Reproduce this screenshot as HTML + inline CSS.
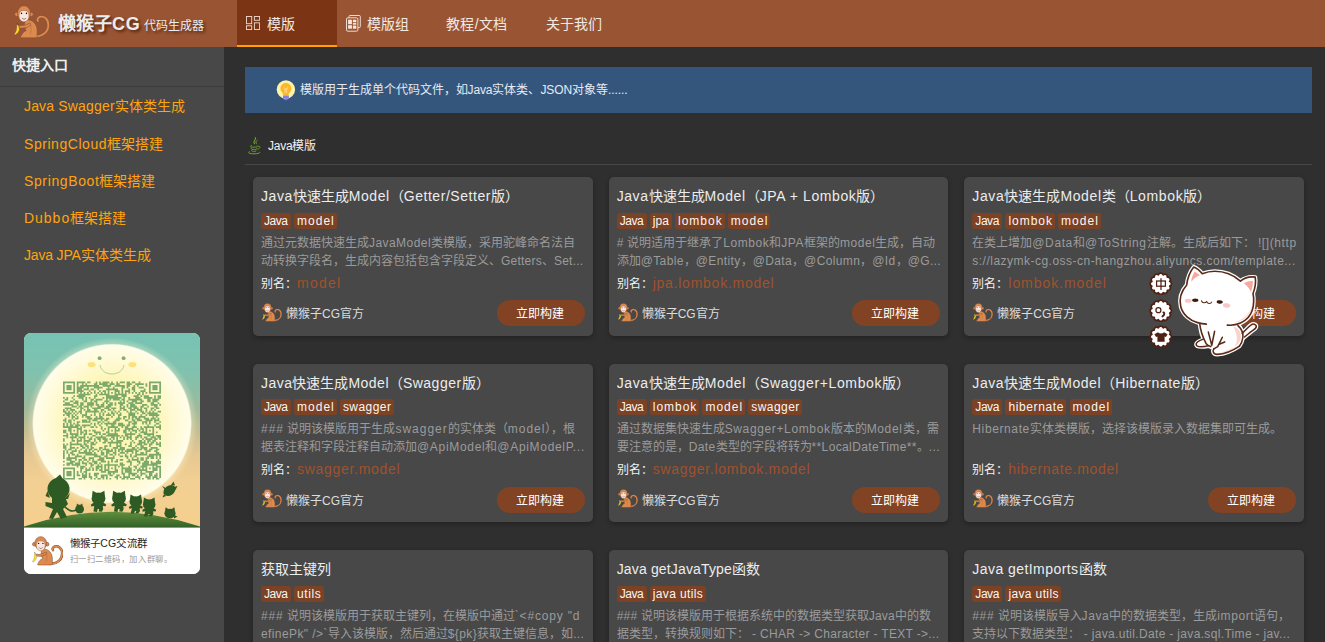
<!DOCTYPE html>
<html lang="zh-CN">
<head>
<meta charset="utf-8">
<title>懒猴子CG 代码生成器</title>
<style>
*{box-sizing:border-box;margin:0;padding:0}
html,body{width:1325px;height:642px;overflow:hidden;background:#2f2f2f;font-family:"Liberation Sans",sans-serif;color:#fff}
body{position:relative}
a{text-decoration:none;color:inherit}
#hdr{position:absolute;left:0;top:0;width:1325px;height:47px;background:#995533}
#logo{position:absolute;left:14px;top:5px;width:36px;height:34px}
#brand{position:absolute;left:58px;top:10px;height:28px;line-height:28px;font-size:18px;font-weight:bold;color:#ececec;text-shadow:2px 2px 3px rgba(60,20,0,.75);white-space:nowrap}
#brand small{font-size:12px;font-weight:normal;margin-left:3px;position:relative;top:0px}
.tab{position:absolute;top:0;height:47px;width:100px;padding-left:9px;font-size:14px;line-height:49px;color:#f3e9e3;white-space:nowrap;overflow:hidden}
.tab.on{background:#7b3514;border-bottom:2px solid #ffa200}
.tab svg{position:absolute;left:9px;top:16px;width:14px;height:14px}
.tab.ic span{position:absolute;left:29.5px;top:0}
#side{position:absolute;left:0;top:47px;width:224px;height:595px;background:#484848}
#side h3{position:absolute;left:12px;top:7px;font-size:14px;line-height:22px;font-weight:bold;color:#f0f0f0}
#side hr{position:absolute;left:0;top:39px;width:224px;height:1px;border:0;background:#3a3a3a}
.ql{position:absolute;left:24px;font-size:14px;line-height:20px;height:20px;color:#ffa40c;white-space:nowrap}
#main{position:absolute;left:224px;top:47px;width:1101px;height:595px;background:#2f2f2f}
#tip{position:absolute;left:245px;top:67px;width:1067px;height:46px;background:#34567d;font-size:12px;line-height:46px;color:#e6ebf2;padding-left:54.5px;white-space:nowrap}
#tip svg{position:absolute;left:31px;top:13px;width:20px;height:22px}
#sec{position:absolute;left:268px;top:135px;font-size:12px;line-height:22px;color:#f2f2f2;white-space:nowrap}
#secic{position:absolute;left:247px;top:137px;width:15px;height:18px}
#sechr{position:absolute;left:245px;top:164px;width:1067px;height:1px;background:#474747}
.card{position:absolute;width:339.67px;height:158.5px;background:#484848;border-radius:5px;box-shadow:0 2px 5px rgba(0,0,0,.28);padding:8px;overflow:hidden}
.card h4{font-size:14px;font-weight:normal;line-height:22px;height:22px;color:#ededed;white-space:nowrap;overflow:hidden}
.tags{height:16px;margin-top:6px;white-space:nowrap;font-size:0}
.tags i{display:inline-block;font-style:normal;font-size:12px;line-height:17.6px;height:16px;padding:0 0 0 3px;text-align:left;overflow:hidden;white-space:nowrap;margin-right:3.1px;vertical-align:top;background:#7b4226;border-radius:2.5px;color:#fbf6f2}
.desc{margin-top:4.5px;height:36px;line-height:18px;font-size:12px;color:#9b9b9b}
.desc>span{display:block;height:18px;white-space:nowrap}
.alias{margin-top:2.5px;height:22px;line-height:22px;font-size:12px;color:#f2f2f2;white-space:nowrap}
.alias b{font-weight:normal;font-size:14px;color:#a0522d}
.by{position:absolute;left:9px;bottom:12.3px;height:20px;line-height:22.4px;font-size:12px;color:#ddd;padding-left:24px;white-space:nowrap}
.by svg{position:absolute;left:0;top:-0.7px;width:20px;height:19px}
.btn{position:absolute;right:8px;bottom:9.5px;width:88px;height:26px;border-radius:13px;background:#824324;font-size:12px;line-height:28.4px;text-align:center;color:#fff;padding-right:2px;overflow:hidden}
.r1 .tags{margin-top:5.6px}.r1 .desc{margin-top:4.9px}
#qr{position:absolute;left:24px;top:333px;width:176px;height:241px;border-radius:7px;overflow:hidden;background:#fff}
</style>
</head>
<body>
<svg style="position:absolute;width:0;height:0;overflow:hidden">
<defs>
<symbol id="mk" viewBox="120 65 500 475">
  <path d="M425 505 C520 500 600 440 598 340 C596 250 530 215 480 232 C450 243 440 270 452 288" fill="none" stroke="#8a5231" stroke-width="40" stroke-linecap="round"/>
  <path d="M425 505 C520 500 600 440 598 340 C596 250 530 215 480 232 C450 243 440 270 452 288" fill="none" stroke="#dd8a4f" stroke-width="26" stroke-linecap="round"/>
  <path d="M300 270 C380 270 440 330 442 420 L442 500 C442 518 430 524 415 524 L225 524 C205 524 203 505 220 495 C230 470 245 440 290 420 C270 400 262 350 270 300 Z" fill="#dd8a4f" stroke="#8a5231" stroke-width="9" stroke-linejoin="round"/>
  <path d="M345 330 C365 380 360 440 345 470" fill="none" stroke="#b06a3b" stroke-width="8" stroke-linecap="round"/>
  <path d="M335 335 C300 372 250 372 205 368" fill="none" stroke="#8a5231" stroke-width="40" stroke-linecap="round"/>
  <path d="M335 335 C300 372 250 372 205 368" fill="none" stroke="#dd8a4f" stroke-width="27" stroke-linecap="round"/>
  <path d="M170 340 C200 380 205 440 135 480 C125 470 128 462 140 450 C160 420 160 380 160 345 Z" fill="#ffe01e" stroke="#a8862a" stroke-width="6" stroke-linejoin="round"/>
  <path d="M158 322 L178 342" stroke="#5a3a1a" stroke-width="9" stroke-linecap="round"/>
  <circle cx="158" cy="195" r="30" fill="#dd8a4f" stroke="#8a5231" stroke-width="9"/>
  <circle cx="358" cy="195" r="30" fill="#dd8a4f" stroke="#8a5231" stroke-width="9"/>
  <ellipse cx="258" cy="180" rx="92" ry="105" fill="#dd8a4f" stroke="#8a5231" stroke-width="9"/>
  <path d="M258 145 C235 135 192 150 190 195 C180 260 215 300 258 300 C301 300 336 260 326 195 C324 150 281 135 258 145 Z" fill="#fbe5df" stroke="#8a5231" stroke-width="7"/>
  <circle cx="224" cy="182" r="11" fill="#1d1008"/>
  <circle cx="293" cy="182" r="11" fill="#1d1008"/>
  <path d="M232 250 C245 270 272 270 285 250" fill="none" stroke="#5a2d1a" stroke-width="8" stroke-linecap="round"/>
</symbol>
<symbol id="badge" viewBox="-11 -11 22 22">
  <path d="M8.40 -2.25A2.4 2.4 0 0 1 8.40 2.25A2.4 2.4 0 0 1 6.15 6.15A2.4 2.4 0 0 1 2.25 8.40A2.4 2.4 0 0 1 -2.25 8.40A2.4 2.4 0 0 1 -6.15 6.15A2.4 2.4 0 0 1 -8.40 2.25A2.4 2.4 0 0 1 -8.40 -2.25A2.4 2.4 0 0 1 -6.15 -6.15A2.4 2.4 0 0 1 -2.25 -8.40A2.4 2.4 0 0 1 2.25 -8.40A2.4 2.4 0 0 1 6.15 -6.15A2.4 2.4 0 0 1 8.40 -2.25Z" fill="#fff" stroke="#4f2114" stroke-width="1.7" stroke-linejoin="round"/>
</symbol>
</defs>
</svg>
<div id="hdr">
  <svg id="logo"><use href="#mk"/></svg>
  <div id="brand">懒猴子<span style="letter-spacing:.8px">CG</span><small>代码生成器</small></div>
  <a class="tab on ic" style="left:237px"><svg viewBox="0 0 14 14" fill="none" stroke="#ecd3c6" stroke-width=".95"><rect x=".5" y=".5" width="5.2" height="7.2"/><rect x="8.4" y=".5" width="5.2" height="3.8"/><rect x=".5" y="9.8" width="5.2" height="3.7"/><rect x="8.4" y="6.8" width="5.2" height="6.7"/></svg><span>模版</span></a>
  <a class="tab ic" style="left:337px"><svg viewBox="0 0 15 17" style="top:15px;width:15px;height:17px" fill="none" stroke="#f3e2d8" stroke-width=".95"><path d="M3 2.6 V1.5 Q3 .5 4 .5 H13.3 Q14.3 .5 14.3 1.5 V11.6 Q14.3 12.6 13.3 12.6 H12"/><rect x=".5" y="2.8" width="11.4" height="13.4" rx="1.3"/><g fill="#f6e8e0" stroke="none"><rect x="2.1" y="4.7" width="3.8" height="4.5"/><rect x="6.9" y="4.7" width="3.4" height="2.6"/><rect x="6.9" y="8.1" width="3.4" height="1.6"/><rect x="2.1" y="10.2" width="3.8" height="3.5"/><rect x="6.9" y="10.6" width="3.4" height="3.1"/></g></svg><span>模版组</span></a>
  <a class="tab" style="left:437px">教程<span style="margin:0 .8px">/</span>文档</a>
  <a class="tab" style="left:537px">关于我们</a>
</div>
<div id="side">
  <h3>快捷入口</h3><hr>
  <a class="ql" style="top:49px" id="q0"><span class="l" style="letter-spacing:0.167px">Java Swagger</span>实体类生成</a>
  <a class="ql" style="top:87px" id="q1"><span class="l" style="letter-spacing:0.554px">SpringCloud</span>框架搭建</a>
  <a class="ql" style="top:124px" id="q2"><span class="l" style="letter-spacing:0.620px">SpringBoot</span>框架搭建</a>
  <a class="ql" style="top:161px" id="q3"><span class="l" style="letter-spacing:0.980px">Dubbo</span>框架搭建</a>
  <a class="ql" style="top:198px" id="q4"><span class="l" style="letter-spacing:-0.175px">Java JPA</span>实体类生成</a>
</div>
<div id="tip"><svg viewBox="0 0 20 22"><circle cx="9.9" cy="9.5" r="9.2" fill="#fdf3a8"/><path d="M9.9 3.1 C6.7 3.1 4.4 5.6 4.4 8.6 C4.4 10.6 5.5 11.9 6.5 12.9 C7.1 13.5 7.3 14.2 7.3 15.2 H12.5 C12.5 14.2 12.7 13.5 13.3 12.9 C14.3 11.9 15.4 10.6 15.4 8.6 C15.4 5.6 13.1 3.1 9.9 3.1Z" fill="#fbb82d"/><path d="M8.2 7.6 L9.1 9.6 L9.9 8.2 L10.7 9.6 L11.6 7.6 M9.1 9.6 V12.6 M10.7 9.6 V12.6" fill="none" stroke="#fde7a0" stroke-width=".7" stroke-linejoin="round" stroke-linecap="round"/><path d="M7 15.6 H12.8 V18 Q12.8 19.6 11.2 19.8 L9.9 20.6 L8.6 19.8 Q7 19.6 7 18Z" fill="#7b72d6"/><path d="M7 17 H12.8 M7.2 18.5 H12.6" stroke="#aaa2f2" stroke-width=".6"/></svg>模版用于生成单个代码文件，如<span class="l" style="letter-spacing:-0.103px">Java</span>实体类、<span class="l" style="letter-spacing:-0.103px">JSON</span>对象等<span class="l" style="letter-spacing:-0.103px">......</span></div>
<svg id="secic" viewBox="0 0 15 18" fill="none" stroke="#6aa51f" stroke-linecap="round"><path d="M8.2 .6 C9.8 2.6 5.4 4 7.4 6.6" stroke-width="1.1"/><path d="M10.2 3.2 C8.6 4.4 8.4 5.4 9.4 6.8" stroke-width=".9"/><path d="M4.2 8.6 C2 9.4 4 10.2 7 10.2 C10 10.2 11.4 9.6 10.4 8.8" stroke-width="1"/><path d="M11.6 9.2 C13.6 8.8 13.8 11.4 10.8 12.2" stroke-width=".9"/><path d="M4.4 11 C3.2 11.8 5 12.6 7.2 12.6 C9 12.6 10.2 12.2 9.8 11.6" stroke-width="1"/><path d="M4.8 13.2 C4 14 5.4 14.6 7.2 14.6 C8.6 14.6 9.6 14.2 9.2 13.8" stroke-width=".9"/><path d="M2.4 14.6 C-.4 15.6 2.4 16.8 7 16.8 C11 16.8 14 16 12.4 15" stroke-width="1"/></svg>
<div id="sec"><span class="l" style="letter-spacing:-0.250px">Java</span>模版</div>
<div id="sechr"></div>

<div class="card r0" style="left:253px;top:177px">
  <h4 id="t0"><span class="l" style="letter-spacing:0.554px">Java</span>快速生成<span class="l" style="letter-spacing:0.554px">Model</span>（<span class="l" style="letter-spacing:0.554px">Getter/Setter</span>版）</h4>
  <div class="tags"><i style="width:30px;letter-spacing:-0.453px">Java</i><i style="width:42.7px;letter-spacing:1.003px">model</i></div>
  <div class="desc"><span id="d0_0">通过元数据快速生成<span class="l" style="letter-spacing:0.441px">JavaModel</span>类模版，采用驼峰命名法自</span><span id="d0_1">动转换字段名，生成内容包括包含字段定义、<span class="l" style="letter-spacing:0.229px">Getters</span>、<span class="l" style="letter-spacing:0.229px">Set...</span></span></div>
  <div class="alias">别名：<b id="a0" style="letter-spacing:1.240px">model</b></div>
  <div class="by"><svg><use href="#mk"/></svg>懒猴子<span class="l">CG</span>官方</div><a class="btn">立即构建</a>
</div>
<div class="card r0" style="left:608.67px;top:177px">
  <h4 id="t1"><span class="l" style="letter-spacing:0.590px">Java</span>快速生成<span class="l" style="letter-spacing:0.590px">Model</span>（<span class="l" style="letter-spacing:0.590px">JPA + Lombok</span>版）</h4>
  <div class="tags"><i style="width:30px;letter-spacing:-0.453px">Java</i><i style="width:22.2px;letter-spacing:0.092px">jpa</i><i style="width:49.6px;letter-spacing:0.983px">lombok</i><i style="width:42.7px;letter-spacing:1.003px">model</i></div>
  <div class="desc"><span id="d1_0"><span class="l" style="letter-spacing:0.544px">#</span> 说明适用于继承了<span class="l" style="letter-spacing:0.544px">Lombok</span>和<span class="l" style="letter-spacing:0.544px">JPA</span>框架的<span class="l" style="letter-spacing:0.544px">model</span>生成，自动</span><span id="d1_1">添加<span class="l" style="letter-spacing:0.379px">@Table</span>，<span class="l" style="letter-spacing:0.379px">@Entity</span>，<span class="l" style="letter-spacing:0.379px">@Data</span>，<span class="l" style="letter-spacing:0.379px">@Column</span>，<span class="l" style="letter-spacing:0.379px">@Id</span>，<span class="l" style="letter-spacing:0.379px">@G...</span></span></div>
  <div class="alias">别名：<b id="a1" style="letter-spacing:0.756px">jpa.lombok.model</b></div>
  <div class="by"><svg><use href="#mk"/></svg>懒猴子<span class="l">CG</span>官方</div><a class="btn">立即构建</a>
</div>
<div class="card r0" style="left:964.33px;top:177px">
  <h4 id="t2"><span class="l" style="letter-spacing:0.627px">Java</span>快速生成<span class="l" style="letter-spacing:0.627px">Model</span>类（<span class="l" style="letter-spacing:0.627px">Lombok</span>版）</h4>
  <div class="tags"><i style="width:30px;letter-spacing:-0.453px">Java</i><i style="width:49.6px;letter-spacing:0.983px">lombok</i><i style="width:42.7px;letter-spacing:1.003px">model</i></div>
  <div class="desc"><span id="d2_0">在类上增加<span class="l" style="letter-spacing:0.605px">@Data</span>和<span class="l" style="letter-spacing:0.605px">@ToString</span>注解。生成后如下： <span class="l" style="letter-spacing:0.605px">![](http</span></span><span id="d2_1"><span class="l" style="letter-spacing:0.481px">s://lazymk-cg.oss-cn-hangzhou.aliyuncs.com/template...</span></span></div>
  <div class="alias">别名：<b id="a2" style="letter-spacing:0.944px">lombok.model</b></div>
  <div class="by"><svg><use href="#mk"/></svg>懒猴子<span class="l">CG</span>官方</div><a class="btn">立即构建</a>
</div>
<div class="card r1" style="left:253px;top:363.5px">
  <h4 id="t3"><span class="l" style="letter-spacing:0.472px">Java</span>快速生成<span class="l" style="letter-spacing:0.472px">Model</span>（<span class="l" style="letter-spacing:0.472px">Swagger</span>版）</h4>
  <div class="tags"><i style="width:30px;letter-spacing:-0.453px">Java</i><i style="width:42.7px;letter-spacing:1.003px">model</i><i style="width:54.1px;letter-spacing:0.457px">swagger</i></div>
  <div class="desc"><span id="d3_0"><span class="l" style="letter-spacing:1.001px">###</span> 说明该模版用于生成<span class="l" style="letter-spacing:1.001px">swagger</span>的实体类（<span class="l" style="letter-spacing:1.001px">model</span>），根</span><span id="d3_1">据表注释和字段注释自动添加<span class="l" style="letter-spacing:0.683px">@ApiModel</span>和<span class="l" style="letter-spacing:0.683px">@ApiModelP...</span></span></div>
  <div class="alias">别名：<b id="a3" style="letter-spacing:0.711px">swagger.model</b></div>
  <div class="by"><svg><use href="#mk"/></svg>懒猴子<span class="l">CG</span>官方</div><a class="btn">立即构建</a>
</div>
<div class="card r1" style="left:608.67px;top:363.5px">
  <h4 id="t4"><span class="l" style="letter-spacing:0.630px">Java</span>快速生成<span class="l" style="letter-spacing:0.630px">Model</span>（<span class="l" style="letter-spacing:0.630px">Swagger+Lombok</span>版）</h4>
  <div class="tags"><i style="width:30px;letter-spacing:-0.453px">Java</i><i style="width:49.6px;letter-spacing:0.983px">lombok</i><i style="width:42.7px;letter-spacing:1.003px">model</i><i style="width:54.1px;letter-spacing:0.457px">swagger</i></div>
  <div class="desc"><span id="d4_0">通过数据集快速生成<span class="l" style="letter-spacing:0.636px">Swagger+Lombok</span>版本的<span class="l" style="letter-spacing:0.636px">Model</span>类，需</span><span id="d4_1">要注意的是，<span class="l" style="letter-spacing:0.374px">Date</span>类型的字段将转为<span class="l" style="letter-spacing:0.374px">**LocalDateTime**</span>。<span class="l" style="letter-spacing:0.374px">...</span></span></div>
  <div class="alias">别名：<b id="a4" style="letter-spacing:0.720px">swagger.lombok.model</b></div>
  <div class="by"><svg><use href="#mk"/></svg>懒猴子<span class="l">CG</span>官方</div><a class="btn">立即构建</a>
</div>
<div class="card r1" style="left:964.33px;top:363.5px">
  <h4 id="t5"><span class="l" style="letter-spacing:0.566px">Java</span>快速生成<span class="l" style="letter-spacing:0.566px">Model</span>（<span class="l" style="letter-spacing:0.566px">Hibernate</span>版）</h4>
  <div class="tags"><i style="width:30px;letter-spacing:-0.453px">Java</i><i style="width:61px;letter-spacing:0.619px">hibernate</i><i style="width:42.7px;letter-spacing:1.003px">model</i></div>
  <div class="desc"><span id="d5_0"><span class="l" style="letter-spacing:0.612px">Hibernate</span>实体类模版，选择该模版录入数据集即可生成。</span><span id="d5_1"></span></div>
  <div class="alias">别名：<b id="a5" style="letter-spacing:0.667px">hibernate.model</b></div>
  <div class="by"><svg><use href="#mk"/></svg>懒猴子<span class="l">CG</span>官方</div><a class="btn">立即构建</a>
</div>
<div class="card r2" style="left:253px;top:550px">
  <h4 id="t6">获取主键列</h4>
  <div class="tags"><i style="width:30px;letter-spacing:-0.453px">Java</i><i style="width:29.7px;letter-spacing:0.589px">utils</i></div>
  <div class="desc"><span id="d6_0"><span class="l" style="letter-spacing:0.812px">###</span> 说明该模版用于获取主键列，在模版中通过<span class="l" style="letter-spacing:0.812px">`&lt;#copy &quot;d</span></span><span id="d6_1"><span class="l" style="letter-spacing:0.400px">efinePk&quot; /&gt;`</span>导入该模版，然后通过<span class="l" style="letter-spacing:0.400px">${pk}</span>获取主键信息，如<span class="l" style="letter-spacing:0.400px">...</span></span></div>
  <div class="alias">别名：<b id="a6" style="letter-spacing:0.400px">definePk</b></div>
  <div class="by"><svg><use href="#mk"/></svg>懒猴子<span class="l">CG</span>官方</div><a class="btn">立即构建</a>
</div>
<div class="card r2" style="left:608.67px;top:550px">
  <h4 id="t7"><span class="l" style="letter-spacing:0.153px">Java getJavaType</span>函数</h4>
  <div class="tags"><i style="width:30px;letter-spacing:-0.453px">Java</i><i style="width:56px;letter-spacing:0.368px">java utils</i></div>
  <div class="desc"><span id="d7_0"><span class="l" style="letter-spacing:0.214px">###</span> 说明该模版用于根据系统中的数据类型获取<span class="l" style="letter-spacing:0.214px">Java</span>中的数</span><span id="d7_1">据类型，转换规则如下： <span class="l" style="letter-spacing:0.324px">- CHAR -&gt; Character - TEXT -&gt;...</span></span></div>
  <div class="alias">别名：<b id="a7" style="letter-spacing:0.400px">getJavaType</b></div>
  <div class="by"><svg><use href="#mk"/></svg>懒猴子<span class="l">CG</span>官方</div><a class="btn">立即构建</a>
</div>
<div class="card r2" style="left:964.33px;top:550px">
  <h4 id="t8"><span class="l" style="letter-spacing:0.439px">Java getImports</span>函数</h4>
  <div class="tags"><i style="width:30px;letter-spacing:-0.453px">Java</i><i style="width:56px;letter-spacing:0.368px">java utils</i></div>
  <div class="desc"><span id="d8_0"><span class="l" style="letter-spacing:0.608px">###</span> 说明该模版导入<span class="l" style="letter-spacing:0.608px">Java</span>中的数据类型，生成<span class="l" style="letter-spacing:0.608px">import</span>语句，</span><span id="d8_1">支持以下数据类型： <span class="l" style="letter-spacing:0.333px">- java.util.Date - java.sql.Time - jav...</span></span></div>
  <div class="alias">别名：<b id="a8" style="letter-spacing:0.400px">getImports</b></div>
  <div class="by"><svg><use href="#mk"/></svg>懒猴子<span class="l">CG</span>官方</div><a class="btn">立即构建</a>
</div>
<svg id="cat" viewBox="0 0 835 642" style="position:absolute;left:1140px;top:260px;width:130px;height:100px">
<g fill="#fff" stroke="#fff" stroke-width="26" stroke-linejoin="round"><path d="M650 476 C680 450 700 425 714 416 C725 408 745 410 747 425 C748 440 735 445 720 455 C700 470 690 480 668 498 Z"/><path d="M384 408 C388 450 396 481 410 510 C385 515 358 530 361 545 C365 562 410 558 440 552 C450 556 462 562 474 571 C462 590 475 606 495 606 C540 604 600 580 639 553 C662 520 664 480 655 455 C648 440 640 428 629 415 Z"/><path d="M561 418 C590 421 620 416 645 405 C700 380 728 330 730 270 C732 250 730 235 726 215 C740 180 745 140 740 110 C705 105 670 115 645 135 C600 95 540 72 480 72 C450 72 425 78 400 88 C385 70 365 52 345 45 C325 70 305 115 300 160 C265 200 250 250 262 300 C275 350 320 388 370 402 C390 408 408 411 426 412Z"/></g>
<path d="M656 471 C680 450 700 425 714 416 C725 408 745 410 747 425 C748 440 735 445 720 455 C700 470 690 480 672 494" fill="none" stroke="#5b2a17" stroke-width="10" stroke-linecap="round" stroke-linejoin="round"/>
<path d="M599 426 C640 440 655 480 645 510 C640 530 625 545 609 556 C625 530 632 490 599 426Z" fill="#f9d3ca"/>
<path d="M620 560 C580 585 540 598 500 602 C560 580 600 560 620 560Z" fill="#f9d3ca" opacity=".7"/>
<g fill="none" stroke="#5b2a17" stroke-width="10" stroke-linecap="round" stroke-linejoin="round">
<path d="M384 412 C388 450 396 481 424 536 C432 546 444 553 454 556"/>
<path d="M406 508 C385 515 358 530 361 545 C365 562 410 558 439 551"/>
<path d="M439 463 L461 548 M479 458 L461 548"/>
<path d="M529 496 L499 556 L474 571 M544 526 L509 541"/>
<path d="M474 571 C462 590 475 606 495 606 C540 604 600 580 639 553"/>
<path d="M629 421 C650 440 664 470 661 496 C658 520 650 540 639 553"/>
</g>
<path d="M640 395 C700 370 728 320 726 260 C715 330 680 375 600 402Z" fill="#f9d9d2" opacity=".8"/>
<path d="M561 418 C590 421 620 416 645 405 C700 380 728 330 730 270 C732 250 730 235 726 215 C740 180 745 140 740 110 C705 105 670 115 645 135 C600 95 540 72 480 72 C450 72 425 78 400 88 C385 70 365 52 345 45 C325 70 305 115 300 160 C265 200 250 250 262 300 C275 350 320 388 370 402 C390 408 408 411 426 412" fill="none" stroke="#5b2a17" stroke-width="10.5" stroke-linecap="round" stroke-linejoin="round"/>
<path d="M350 75 C335 100 328 125 330 140 C345 118 365 105 385 98 C375 88 362 78 350 75Z" fill="#f7a9a0"/>
<path d="M725 135 C700 132 680 140 668 150 C690 165 705 185 712 205 C722 180 726 158 725 135Z" fill="#f7a9a0"/>
<ellipse cx="310" cy="262" rx="22" ry="13" fill="#fbc6c6"/><ellipse cx="556" cy="292" rx="24" ry="14" fill="#fbc6c6" transform="rotate(8 556 292)"/>
<ellipse cx="355" cy="258" rx="20" ry="11" fill="#3d180c"/><ellipse cx="512" cy="270" rx="20" ry="11" fill="#3d180c" transform="rotate(5 512 270)"/>
<path d="M395 262 C400 278 420 278 428 266 C432 282 455 284 460 270" fill="none" stroke="#5b2a17" stroke-width="7" stroke-linecap="round" stroke-linejoin="round"/>
</svg>
<svg class="bdg" style="position:absolute;left:1149.2px;top:271.9px;width:23.6px;height:23.6px"><use href="#badge"/></svg>
<svg class="bdg" style="position:absolute;left:1149.2px;top:298.7px;width:23.6px;height:23.6px"><use href="#badge"/></svg>
<svg class="bdg" style="position:absolute;left:1149.2px;top:324.9px;width:23.6px;height:23.6px"><use href="#badge"/></svg>
<svg viewBox="0 0 22 22" style="position:absolute;left:1150px;top:272.7px;width:22px;height:22px" fill="none" stroke="#4f2114" stroke-width="1.25"><rect x="6.6" y="8" width="8.8" height="5.2"/><path d="M11 5.2V17"/><title>中</title></svg>
<svg viewBox="0 0 22 22" style="position:absolute;left:1150px;top:299.5px;width:22px;height:22px"><circle cx="8.4" cy="10.2" r="2.5" fill="none" stroke="#4f2114" stroke-width="1.25"/><path d="M13.4 12.4 C14.8 12.6 14.6 15.2 12.4 16.4" fill="none" stroke="#4f2114" stroke-width="1.9" stroke-linecap="round"/></svg>
<svg viewBox="0 0 22 22" style="position:absolute;left:1150px;top:325.7px;width:22px;height:22px"><path d="M8 6.2 C9.2 7.8 12.8 7.8 14 6.2 L17.6 8.2 L16 11 L14.6 10.4 V15.8 H7.4 V10.4 L6 11 L4.4 8.2Z" fill="#4f2114"/></svg>
<div id="qr"><svg viewBox="0 0 176 241" width="176" height="241" style="position:absolute;left:0;top:0">
<defs>
<linearGradient id="sky" x1="0" y1="0" x2="0" y2="1"><stop offset="0" stop-color="#76c3b4"/><stop offset=".22" stop-color="#82c1ad"/><stop offset=".38" stop-color="#9dba9c"/><stop offset=".5" stop-color="#c4bd92"/><stop offset=".62" stop-color="#e6c892"/><stop offset=".75" stop-color="#f2cf93"/><stop offset="1" stop-color="#f5d08d"/></linearGradient>
<radialGradient id="moon" cx=".5" cy=".5" r=".5"><stop offset="0" stop-color="#fdf5ae"/><stop offset=".55" stop-color="#fdf6b8"/><stop offset=".85" stop-color="#fffbdc"/><stop offset=".98" stop-color="#fffdea"/><stop offset="1" stop-color="#fffdea" stop-opacity="0"/></radialGradient>
<radialGradient id="glow" cx=".5" cy=".5" r=".5"><stop offset=".88" stop-color="#fffbd0" stop-opacity=".5"/><stop offset="1" stop-color="#fffbd0" stop-opacity="0"/></radialGradient>
<linearGradient id="hill" x1="0" y1="0" x2="0" y2="1"><stop offset="0" stop-color="#5f8f3e"/><stop offset="1" stop-color="#2f5c26"/></linearGradient>
</defs>
<rect width="176" height="196" fill="url(#sky)"/>
<circle cx="88" cy="90.4" r="86" fill="url(#glow)"/>
<circle cx="88" cy="90.4" r="80" fill="url(#moon)"/>
<circle cx="75.6" cy="25.2" r="1.9" fill="#7fae72"/><circle cx="99.6" cy="25.2" r="1.9" fill="#7fae72"/>
<ellipse cx="67.6" cy="31.6" rx="4" ry="2.6" fill="#fbe27c"/><ellipse cx="108.4" cy="31.6" rx="4" ry="2.6" fill="#fbe27c"/>
<path d="M76 32 C78 44 98 44 100 32" fill="none" stroke="#8ab47a" stroke-width=".6"/>
<g transform="translate(39 48.6) scale(1.71930)"><path d="M0 0h7v1h-7zM8 0h5v1h-5zM14 0h2v1h-2zM19 0h1v1h-1zM21 0h1v1h-1zM23 0h4v1h-4zM28 0h1v1h-1zM31 0h1v1h-1zM33 0h3v1h-3zM37 0h2v1h-2zM40 0h2v1h-2zM44 0h1v1h-1zM50 0h7v1h-7zM0 1h1v1h-1zM6 1h1v1h-1zM8 1h1v1h-1zM11 1h1v1h-1zM13 1h1v1h-1zM18 1h2v1h-2zM21 1h5v1h-5zM27 1h3v1h-3zM31 1h2v1h-2zM37 1h3v1h-3zM42 1h5v1h-5zM48 1h1v1h-1zM50 1h1v1h-1zM56 1h1v1h-1zM0 2h1v1h-1zM2 2h3v1h-3zM6 2h1v1h-1zM8 2h1v1h-1zM10 2h11v1h-11zM23 2h5v1h-5zM30 2h6v1h-6zM37 2h2v1h-2zM41 2h1v1h-1zM43 2h1v1h-1zM48 2h1v1h-1zM50 2h1v1h-1zM52 2h3v1h-3zM56 2h1v1h-1zM0 3h1v1h-1zM2 3h3v1h-3zM6 3h1v1h-1zM8 3h4v1h-4zM14 3h1v1h-1zM18 3h5v1h-5zM26 3h1v1h-1zM29 3h1v1h-1zM34 3h2v1h-2zM37 3h1v1h-1zM40 3h2v1h-2zM44 3h3v1h-3zM50 3h1v1h-1zM52 3h3v1h-3zM56 3h1v1h-1zM0 4h1v1h-1zM2 4h3v1h-3zM6 4h1v1h-1zM8 4h3v1h-3zM12 4h3v1h-3zM16 4h2v1h-2zM20 4h1v1h-1zM25 4h7v1h-7zM34 4h1v1h-1zM38 4h1v1h-1zM40 4h2v1h-2zM47 4h1v1h-1zM50 4h1v1h-1zM52 4h3v1h-3zM56 4h1v1h-1zM0 5h1v1h-1zM6 5h1v1h-1zM8 5h4v1h-4zM15 5h1v1h-1zM18 5h1v1h-1zM21 5h1v1h-1zM23 5h2v1h-2zM26 5h1v1h-1zM30 5h3v1h-3zM34 5h1v1h-1zM36 5h3v1h-3zM41 5h1v1h-1zM45 5h3v1h-3zM50 5h1v1h-1zM56 5h1v1h-1zM0 6h7v1h-7zM8 6h1v1h-1zM10 6h1v1h-1zM12 6h1v1h-1zM14 6h1v1h-1zM16 6h1v1h-1zM18 6h1v1h-1zM20 6h1v1h-1zM22 6h1v1h-1zM24 6h1v1h-1zM26 6h1v1h-1zM28 6h1v1h-1zM30 6h1v1h-1zM32 6h1v1h-1zM34 6h1v1h-1zM36 6h1v1h-1zM38 6h1v1h-1zM40 6h1v1h-1zM42 6h1v1h-1zM44 6h1v1h-1zM46 6h1v1h-1zM48 6h1v1h-1zM50 6h7v1h-7zM9 7h7v1h-7zM19 7h1v1h-1zM21 7h6v1h-6zM30 7h7v1h-7zM43 7h2v1h-2zM46 7h1v1h-1zM6 8h1v1h-1zM8 8h5v1h-5zM18 8h2v1h-2zM25 8h7v1h-7zM34 8h3v1h-3zM41 8h3v1h-3zM45 8h1v1h-1zM47 8h3v1h-3zM53 8h1v1h-1zM55 8h2v1h-2zM0 9h1v1h-1zM2 9h1v1h-1zM5 9h1v1h-1zM9 9h3v1h-3zM13 9h1v1h-1zM15 9h1v1h-1zM18 9h1v1h-1zM23 9h1v1h-1zM25 9h9v1h-9zM35 9h1v1h-1zM38 9h1v1h-1zM42 9h3v1h-3zM47 9h5v1h-5zM53 9h1v1h-1zM55 9h2v1h-2zM1 10h2v1h-2zM6 10h1v1h-1zM11 10h1v1h-1zM13 10h1v1h-1zM16 10h2v1h-2zM19 10h4v1h-4zM25 10h1v1h-1zM27 10h1v1h-1zM29 10h4v1h-4zM34 10h2v1h-2zM38 10h8v1h-8zM49 10h2v1h-2zM52 10h4v1h-4zM0 11h1v1h-1zM4 11h2v1h-2zM7 11h2v1h-2zM12 11h2v1h-2zM16 11h1v1h-1zM18 11h2v1h-2zM24 11h3v1h-3zM33 11h1v1h-1zM35 11h1v1h-1zM37 11h1v1h-1zM40 11h3v1h-3zM45 11h2v1h-2zM49 11h2v1h-2zM52 11h3v1h-3zM1 12h3v1h-3zM6 12h3v1h-3zM10 12h2v1h-2zM14 12h4v1h-4zM19 12h1v1h-1zM23 12h1v1h-1zM25 12h1v1h-1zM27 12h2v1h-2zM30 12h1v1h-1zM32 12h4v1h-4zM38 12h3v1h-3zM42 12h4v1h-4zM51 12h2v1h-2zM55 12h1v1h-1zM0 13h6v1h-6zM8 13h1v1h-1zM10 13h2v1h-2zM14 13h4v1h-4zM19 13h2v1h-2zM22 13h2v1h-2zM26 13h3v1h-3zM30 13h1v1h-1zM33 13h2v1h-2zM37 13h1v1h-1zM39 13h3v1h-3zM46 13h3v1h-3zM51 13h4v1h-4zM56 13h1v1h-1zM5 14h3v1h-3zM9 14h2v1h-2zM12 14h3v1h-3zM16 14h1v1h-1zM20 14h4v1h-4zM25 14h3v1h-3zM33 14h1v1h-1zM35 14h1v1h-1zM37 14h1v1h-1zM39 14h4v1h-4zM45 14h2v1h-2zM49 14h1v1h-1zM53 14h2v1h-2zM1 15h4v1h-4zM8 15h1v1h-1zM10 15h2v1h-2zM14 15h1v1h-1zM17 15h5v1h-5zM24 15h3v1h-3zM28 15h3v1h-3zM33 15h3v1h-3zM38 15h2v1h-2zM41 15h3v1h-3zM45 15h1v1h-1zM47 15h2v1h-2zM51 15h2v1h-2zM54 15h2v1h-2zM0 16h1v1h-1zM2 16h1v1h-1zM4 16h3v1h-3zM10 16h1v1h-1zM12 16h1v1h-1zM14 16h2v1h-2zM18 16h2v1h-2zM22 16h2v1h-2zM26 16h2v1h-2zM29 16h1v1h-1zM33 16h1v1h-1zM35 16h2v1h-2zM39 16h3v1h-3zM43 16h3v1h-3zM48 16h1v1h-1zM51 16h1v1h-1zM53 16h1v1h-1zM0 17h2v1h-2zM3 17h1v1h-1zM5 17h1v1h-1zM7 17h1v1h-1zM9 17h2v1h-2zM13 17h8v1h-8zM22 17h1v1h-1zM24 17h1v1h-1zM28 17h1v1h-1zM30 17h1v1h-1zM32 17h1v1h-1zM37 17h1v1h-1zM39 17h1v1h-1zM42 17h1v1h-1zM45 17h2v1h-2zM48 17h1v1h-1zM50 17h1v1h-1zM52 17h1v1h-1zM55 17h2v1h-2zM1 18h4v1h-4zM6 18h1v1h-1zM8 18h1v1h-1zM10 18h1v1h-1zM13 18h1v1h-1zM18 18h1v1h-1zM21 18h1v1h-1zM23 18h1v1h-1zM26 18h1v1h-1zM28 18h2v1h-2zM31 18h1v1h-1zM33 18h1v1h-1zM38 18h4v1h-4zM43 18h1v1h-1zM46 18h2v1h-2zM49 18h6v1h-6zM0 19h1v1h-1zM2 19h2v1h-2zM5 19h1v1h-1zM7 19h1v1h-1zM11 19h3v1h-3zM16 19h1v1h-1zM18 19h1v1h-1zM21 19h1v1h-1zM23 19h1v1h-1zM25 19h3v1h-3zM29 19h1v1h-1zM32 19h2v1h-2zM38 19h4v1h-4zM45 19h1v1h-1zM48 19h1v1h-1zM50 19h6v1h-6zM3 20h1v1h-1zM5 20h2v1h-2zM8 20h1v1h-1zM11 20h1v1h-1zM13 20h3v1h-3zM19 20h1v1h-1zM21 20h2v1h-2zM28 20h1v1h-1zM32 20h1v1h-1zM35 20h2v1h-2zM38 20h1v1h-1zM40 20h3v1h-3zM44 20h4v1h-4zM52 20h1v1h-1zM54 20h1v1h-1zM1 21h1v1h-1zM5 21h1v1h-1zM7 21h2v1h-2zM14 21h3v1h-3zM18 21h6v1h-6zM25 21h2v1h-2zM31 21h3v1h-3zM35 21h1v1h-1zM38 21h1v1h-1zM40 21h1v1h-1zM42 21h3v1h-3zM47 21h3v1h-3zM51 21h3v1h-3zM55 21h1v1h-1zM0 22h2v1h-2zM3 22h2v1h-2zM6 22h1v1h-1zM11 22h3v1h-3zM15 22h1v1h-1zM17 22h3v1h-3zM22 22h1v1h-1zM24 22h2v1h-2zM30 22h3v1h-3zM36 22h2v1h-2zM40 22h2v1h-2zM43 22h3v1h-3zM48 22h4v1h-4zM53 22h3v1h-3zM1 23h1v1h-1zM3 23h2v1h-2zM8 23h2v1h-2zM11 23h5v1h-5zM20 23h2v1h-2zM23 23h1v1h-1zM26 23h1v1h-1zM29 23h2v1h-2zM38 23h2v1h-2zM41 23h2v1h-2zM46 23h3v1h-3zM50 23h1v1h-1zM53 23h1v1h-1zM56 23h1v1h-1zM0 24h1v1h-1zM2 24h1v1h-1zM4 24h1v1h-1zM6 24h1v1h-1zM8 24h1v1h-1zM16 24h1v1h-1zM18 24h1v1h-1zM20 24h1v1h-1zM22 24h1v1h-1zM24 24h7v1h-7zM32 24h3v1h-3zM38 24h1v1h-1zM40 24h3v1h-3zM46 24h1v1h-1zM48 24h1v1h-1zM50 24h1v1h-1zM54 24h2v1h-2zM0 25h1v1h-1zM2 25h1v1h-1zM4 25h2v1h-2zM7 25h3v1h-3zM11 25h5v1h-5zM18 25h1v1h-1zM21 25h1v1h-1zM25 25h1v1h-1zM28 25h2v1h-2zM32 25h4v1h-4zM37 25h2v1h-2zM41 25h1v1h-1zM49 25h1v1h-1zM53 25h1v1h-1zM56 25h1v1h-1zM0 26h9v1h-9zM10 26h1v1h-1zM12 26h1v1h-1zM16 26h2v1h-2zM19 26h1v1h-1zM22 26h1v1h-1zM26 26h6v1h-6zM34 26h1v1h-1zM36 26h2v1h-2zM40 26h3v1h-3zM45 26h1v1h-1zM47 26h6v1h-6zM54 26h3v1h-3zM3 27h2v1h-2zM8 27h3v1h-3zM22 27h1v1h-1zM24 27h1v1h-1zM26 27h1v1h-1zM30 27h1v1h-1zM32 27h1v1h-1zM36 27h5v1h-5zM43 27h1v1h-1zM45 27h2v1h-2zM48 27h1v1h-1zM52 27h1v1h-1zM56 27h1v1h-1zM0 28h2v1h-2zM3 28h2v1h-2zM6 28h1v1h-1zM8 28h1v1h-1zM10 28h1v1h-1zM12 28h2v1h-2zM15 28h1v1h-1zM17 28h2v1h-2zM23 28h1v1h-1zM26 28h1v1h-1zM28 28h1v1h-1zM30 28h3v1h-3zM35 28h2v1h-2zM38 28h1v1h-1zM40 28h3v1h-3zM44 28h1v1h-1zM46 28h1v1h-1zM48 28h1v1h-1zM50 28h1v1h-1zM52 28h1v1h-1zM0 29h2v1h-2zM4 29h1v1h-1zM8 29h1v1h-1zM10 29h2v1h-2zM13 29h1v1h-1zM18 29h4v1h-4zM25 29h2v1h-2zM30 29h1v1h-1zM35 29h2v1h-2zM39 29h1v1h-1zM42 29h1v1h-1zM45 29h4v1h-4zM52 29h1v1h-1zM54 29h1v1h-1zM2 30h1v1h-1zM4 30h5v1h-5zM10 30h1v1h-1zM12 30h2v1h-2zM15 30h2v1h-2zM19 30h1v1h-1zM21 30h1v1h-1zM23 30h2v1h-2zM26 30h6v1h-6zM36 30h6v1h-6zM44 30h1v1h-1zM47 30h6v1h-6zM0 31h3v1h-3zM5 31h1v1h-1zM7 31h2v1h-2zM12 31h1v1h-1zM17 31h2v1h-2zM22 31h1v1h-1zM25 31h8v1h-8zM34 31h1v1h-1zM36 31h2v1h-2zM39 31h1v1h-1zM43 31h3v1h-3zM49 31h2v1h-2zM52 31h1v1h-1zM54 31h3v1h-3zM2 32h1v1h-1zM4 32h4v1h-4zM9 32h4v1h-4zM14 32h1v1h-1zM16 32h1v1h-1zM19 32h6v1h-6zM28 32h2v1h-2zM31 32h1v1h-1zM33 32h1v1h-1zM35 32h1v1h-1zM37 32h3v1h-3zM42 32h2v1h-2zM45 32h1v1h-1zM47 32h2v1h-2zM51 32h3v1h-3zM55 32h2v1h-2zM0 33h1v1h-1zM5 33h1v1h-1zM8 33h1v1h-1zM10 33h1v1h-1zM12 33h1v1h-1zM15 33h2v1h-2zM18 33h1v1h-1zM20 33h2v1h-2zM23 33h3v1h-3zM27 33h1v1h-1zM29 33h1v1h-1zM31 33h1v1h-1zM35 33h1v1h-1zM37 33h1v1h-1zM39 33h1v1h-1zM42 33h1v1h-1zM46 33h1v1h-1zM48 33h4v1h-4zM53 33h2v1h-2zM56 33h1v1h-1zM0 34h1v1h-1zM5 34h2v1h-2zM8 34h3v1h-3zM12 34h4v1h-4zM18 34h1v1h-1zM21 34h1v1h-1zM24 34h2v1h-2zM28 34h1v1h-1zM31 34h4v1h-4zM40 34h1v1h-1zM44 34h2v1h-2zM47 34h1v1h-1zM49 34h2v1h-2zM52 34h2v1h-2zM4 35h1v1h-1zM8 35h1v1h-1zM12 35h1v1h-1zM14 35h1v1h-1zM16 35h2v1h-2zM19 35h1v1h-1zM23 35h2v1h-2zM26 35h8v1h-8zM39 35h1v1h-1zM41 35h1v1h-1zM44 35h4v1h-4zM49 35h1v1h-1zM51 35h2v1h-2zM54 35h1v1h-1zM56 35h1v1h-1zM0 36h1v1h-1zM2 36h1v1h-1zM4 36h7v1h-7zM12 36h2v1h-2zM16 36h3v1h-3zM27 36h1v1h-1zM31 36h1v1h-1zM33 36h1v1h-1zM36 36h1v1h-1zM39 36h1v1h-1zM43 36h3v1h-3zM47 36h2v1h-2zM50 36h2v1h-2zM54 36h3v1h-3zM0 37h2v1h-2zM4 37h1v1h-1zM10 37h2v1h-2zM13 37h2v1h-2zM16 37h1v1h-1zM24 37h2v1h-2zM27 37h1v1h-1zM31 37h3v1h-3zM38 37h2v1h-2zM42 37h1v1h-1zM45 37h2v1h-2zM50 37h1v1h-1zM56 37h1v1h-1zM0 38h2v1h-2zM4 38h3v1h-3zM8 38h1v1h-1zM11 38h2v1h-2zM14 38h1v1h-1zM16 38h2v1h-2zM21 38h2v1h-2zM24 38h1v1h-1zM29 38h3v1h-3zM33 38h3v1h-3zM40 38h2v1h-2zM43 38h1v1h-1zM45 38h4v1h-4zM51 38h4v1h-4zM1 39h1v1h-1zM3 39h2v1h-2zM7 39h1v1h-1zM10 39h1v1h-1zM13 39h1v1h-1zM15 39h2v1h-2zM18 39h2v1h-2zM21 39h1v1h-1zM23 39h4v1h-4zM28 39h1v1h-1zM30 39h1v1h-1zM32 39h4v1h-4zM37 39h6v1h-6zM44 39h2v1h-2zM47 39h2v1h-2zM50 39h2v1h-2zM54 39h2v1h-2zM0 40h1v1h-1zM2 40h1v1h-1zM5 40h3v1h-3zM9 40h1v1h-1zM12 40h2v1h-2zM15 40h1v1h-1zM17 40h1v1h-1zM20 40h1v1h-1zM22 40h1v1h-1zM25 40h4v1h-4zM30 40h1v1h-1zM32 40h1v1h-1zM34 40h1v1h-1zM36 40h5v1h-5zM42 40h2v1h-2zM48 40h3v1h-3zM53 40h2v1h-2zM0 41h1v1h-1zM2 41h1v1h-1zM4 41h2v1h-2zM9 41h8v1h-8zM18 41h1v1h-1zM22 41h2v1h-2zM25 41h2v1h-2zM29 41h2v1h-2zM33 41h3v1h-3zM37 41h1v1h-1zM40 41h1v1h-1zM42 41h1v1h-1zM45 41h2v1h-2zM48 41h1v1h-1zM54 41h2v1h-2zM0 42h1v1h-1zM3 42h1v1h-1zM5 42h2v1h-2zM8 42h1v1h-1zM13 42h7v1h-7zM22 42h2v1h-2zM25 42h1v1h-1zM27 42h2v1h-2zM30 42h1v1h-1zM32 42h1v1h-1zM36 42h1v1h-1zM39 42h1v1h-1zM42 42h7v1h-7zM50 42h7v1h-7zM0 43h1v1h-1zM3 43h1v1h-1zM7 43h4v1h-4zM12 43h1v1h-1zM18 43h4v1h-4zM24 43h2v1h-2zM29 43h1v1h-1zM33 43h2v1h-2zM36 43h2v1h-2zM39 43h1v1h-1zM41 43h2v1h-2zM49 43h4v1h-4zM54 43h1v1h-1zM56 43h1v1h-1zM0 44h1v1h-1zM2 44h6v1h-6zM11 44h2v1h-2zM15 44h3v1h-3zM21 44h3v1h-3zM25 44h5v1h-5zM37 44h1v1h-1zM40 44h1v1h-1zM43 44h1v1h-1zM45 44h2v1h-2zM48 44h2v1h-2zM51 44h2v1h-2zM54 44h1v1h-1zM56 44h1v1h-1zM2 45h3v1h-3zM7 45h1v1h-1zM9 45h2v1h-2zM12 45h2v1h-2zM15 45h1v1h-1zM17 45h1v1h-1zM20 45h4v1h-4zM28 45h1v1h-1zM31 45h1v1h-1zM33 45h2v1h-2zM38 45h1v1h-1zM40 45h4v1h-4zM45 45h2v1h-2zM48 45h1v1h-1zM55 45h1v1h-1zM0 46h1v1h-1zM4 46h3v1h-3zM9 46h1v1h-1zM11 46h1v1h-1zM14 46h1v1h-1zM17 46h3v1h-3zM22 46h3v1h-3zM26 46h1v1h-1zM28 46h1v1h-1zM30 46h2v1h-2zM37 46h3v1h-3zM43 46h2v1h-2zM47 46h3v1h-3zM51 46h1v1h-1zM54 46h3v1h-3zM2 47h4v1h-4zM7 47h3v1h-3zM11 47h3v1h-3zM15 47h2v1h-2zM18 47h2v1h-2zM21 47h1v1h-1zM26 47h1v1h-1zM33 47h2v1h-2zM39 47h1v1h-1zM44 47h1v1h-1zM46 47h4v1h-4zM51 47h6v1h-6zM0 48h1v1h-1zM2 48h2v1h-2zM5 48h5v1h-5zM13 48h1v1h-1zM16 48h2v1h-2zM20 48h1v1h-1zM22 48h1v1h-1zM24 48h8v1h-8zM33 48h3v1h-3zM39 48h1v1h-1zM43 48h1v1h-1zM46 48h9v1h-9zM8 49h1v1h-1zM10 49h3v1h-3zM16 49h1v1h-1zM19 49h4v1h-4zM24 49h1v1h-1zM26 49h1v1h-1zM30 49h1v1h-1zM32 49h1v1h-1zM34 49h1v1h-1zM38 49h1v1h-1zM41 49h2v1h-2zM45 49h4v1h-4zM52 49h1v1h-1zM54 49h3v1h-3zM0 50h7v1h-7zM10 50h2v1h-2zM13 50h1v1h-1zM15 50h1v1h-1zM17 50h1v1h-1zM19 50h2v1h-2zM22 50h1v1h-1zM24 50h1v1h-1zM26 50h1v1h-1zM28 50h1v1h-1zM30 50h1v1h-1zM34 50h6v1h-6zM42 50h1v1h-1zM44 50h1v1h-1zM46 50h1v1h-1zM48 50h1v1h-1zM50 50h1v1h-1zM52 50h3v1h-3zM56 50h1v1h-1zM0 51h1v1h-1zM6 51h1v1h-1zM10 51h1v1h-1zM13 51h3v1h-3zM17 51h1v1h-1zM19 51h1v1h-1zM21 51h2v1h-2zM24 51h3v1h-3zM30 51h2v1h-2zM34 51h1v1h-1zM36 51h4v1h-4zM41 51h1v1h-1zM43 51h6v1h-6zM52 51h3v1h-3zM56 51h1v1h-1zM0 52h1v1h-1zM2 52h3v1h-3zM6 52h1v1h-1zM8 52h1v1h-1zM10 52h1v1h-1zM12 52h2v1h-2zM22 52h3v1h-3zM26 52h6v1h-6zM34 52h1v1h-1zM36 52h4v1h-4zM43 52h1v1h-1zM45 52h1v1h-1zM48 52h5v1h-5zM56 52h1v1h-1zM0 53h1v1h-1zM2 53h3v1h-3zM6 53h1v1h-1zM8 53h1v1h-1zM11 53h1v1h-1zM13 53h1v1h-1zM15 53h1v1h-1zM18 53h3v1h-3zM26 53h2v1h-2zM29 53h1v1h-1zM34 53h2v1h-2zM38 53h5v1h-5zM45 53h3v1h-3zM50 53h2v1h-2zM54 53h1v1h-1zM56 53h1v1h-1zM0 54h1v1h-1zM2 54h3v1h-3zM6 54h1v1h-1zM8 54h2v1h-2zM11 54h3v1h-3zM15 54h1v1h-1zM18 54h2v1h-2zM22 54h4v1h-4zM27 54h2v1h-2zM31 54h2v1h-2zM35 54h1v1h-1zM38 54h1v1h-1zM40 54h2v1h-2zM43 54h1v1h-1zM45 54h1v1h-1zM48 54h1v1h-1zM50 54h2v1h-2zM53 54h2v1h-2zM56 54h1v1h-1zM0 55h1v1h-1zM6 55h1v1h-1zM11 55h3v1h-3zM15 55h2v1h-2zM19 55h1v1h-1zM22 55h2v1h-2zM25 55h1v1h-1zM30 55h2v1h-2zM33 55h1v1h-1zM35 55h4v1h-4zM42 55h3v1h-3zM48 55h3v1h-3zM52 55h3v1h-3zM56 55h1v1h-1zM0 56h7v1h-7zM9 56h2v1h-2zM12 56h1v1h-1zM16 56h1v1h-1zM18 56h1v1h-1zM20 56h2v1h-2zM23 56h1v1h-1zM25 56h1v1h-1zM27 56h1v1h-1zM31 56h1v1h-1zM34 56h2v1h-2zM37 56h1v1h-1zM39 56h3v1h-3zM44 56h1v1h-1zM46 56h1v1h-1zM49 56h2v1h-2zM52 56h1v1h-1zM54 56h2v1h-2z" fill="#7daa6b"/></g>
<path d="M0 193.5 Q88 164 176 193.5 V196 H0Z" fill="url(#hill)"/>
<g fill="#2e5a24"><circle cx="34.5" cy="156" r="11"/><path d="M26 150 L36 141.5 L41 149Z"/><path d="M23.5 158 L21.5 163 L26 165Z"/><path d="M46 160 L44 166 L40 166Z"/><path d="M28 164 L41 164 L44 171 L39 176 L43 184 L37 186 L33 179 L29 186 L25 185.5 L29 176 L21.5 173 L21.5 169 L28 170Z"/><path d="M40 173 C45 178 48 179 52 177" fill="none" stroke="#2e5a24" stroke-width="1.6"/><circle cx="55.6" cy="176.2" r="4.4"/><path d="M52.5 173 L53 170.5 L55 172Z"/><path d="M58.7 173 L58.2 170.5 L56.2 172Z"/><ellipse cx="74.5" cy="165.5" rx="6.9" ry="5.9"/><path d="M68.0 163.9 L68.6 157.8 L73.3 160.2Z"/><path d="M81.0 163.9 L80.4 157.8 L75.7 160.2Z"/><path d="M70.2 169.2 L78.8 169.2 L82.2 171.4 L81.6 173.2 L78.8 172.9 L79.2 176.0 L77.9 178.8 L74.8 178.5 L75.1 176.0 L73.6 176.0 L73.0 179.1 L69.5 178.5 L70.2 172.9 L67.4 173.6 L66.8 171.7Z"/><ellipse cx="95" cy="165.5" rx="6.9" ry="5.9"/><path d="M88.5 163.9 L89.1 157.8 L93.8 160.2Z"/><path d="M101.5 163.9 L100.9 157.8 L96.2 160.2Z"/><path d="M90.7 169.2 L99.3 169.2 L102.8 171.4 L102.1 173.2 L99.3 172.9 L99.7 176.0 L98.4 178.8 L95.3 178.5 L95.6 176.0 L94.1 176.0 L93.5 179.1 L90.0 178.5 L90.7 172.9 L87.9 173.6 L87.2 171.7Z"/><ellipse cx="111.8" cy="168.5" rx="6.3" ry="5.3"/><path d="M105.9 167.1 L106.5 161.5 L110.7 163.7Z"/><path d="M117.7 167.1 L117.1 161.5 L112.9 163.7Z"/><path d="M107.9 171.9 L115.7 171.9 L118.8 173.8 L118.2 175.5 L115.7 175.2 L116.0 178.0 L114.3 180.5 L111.5 180.3 L112.4 178.0 L111.0 178.0 L109.8 180.8 L106.7 180.3 L107.9 175.2 L105.4 175.8 L104.8 174.1Z"/><ellipse cx="125.2" cy="171.5" rx="6.3" ry="5.3"/><path d="M119.3 170.1 L119.9 164.5 L124.1 166.7Z"/><path d="M131.1 170.1 L130.5 164.5 L126.3 166.7Z"/><path d="M121.3 174.9 L129.1 174.9 L132.2 176.8 L131.6 178.5 L129.1 178.2 L129.4 181.0 L127.5 183.5 L124.7 183.3 L125.8 181.0 L124.4 181.0 L123.0 183.8 L119.9 183.3 L121.3 178.2 L118.8 178.8 L118.2 177.1Z"/><ellipse cx="145.5" cy="157.5" rx="6.6" ry="4.8" transform="rotate(-35 145.5 157.5)"/><path d="M147 152 L149.5 148.5 L151 152.5Z"/><path d="M150 154 L153.5 153 L151.5 157Z"/><path d="M140 161 L138.5 164.5 L142 163Z"/><path d="M141 154.5 L138 153 L141.5 157.5Z"/><ellipse cx="146" cy="180.5" rx="5.6" ry="4.8"/><path d="M141 178 L141.6 174.3 L145 176.5Z"/><path d="M151 178 L150.4 174.3 L147 176.5Z"/><path d="M150 182 L153.5 183.5 L150 185.5Z"/></g>
<rect y="194.6" width="176" height="47" fill="#fff"/>
</svg>
<svg style="position:absolute;left:7.6px;top:202.6px;width:31.6px;height:30px"><use href="#mk"/></svg>
<div style="position:absolute;left:45.6px;top:202px;font-size:10.5px;line-height:16px;color:#1f1f1f;white-space:nowrap;letter-spacing:.2px">懒猴子CG交流群</div>
<div style="position:absolute;left:45.6px;top:220px;font-size:8.3px;line-height:12px;color:#9a9a9a;white-space:nowrap;letter-spacing:.55px">扫一扫二维码，加入群聊。</div>
</div>
</body>
</html>
